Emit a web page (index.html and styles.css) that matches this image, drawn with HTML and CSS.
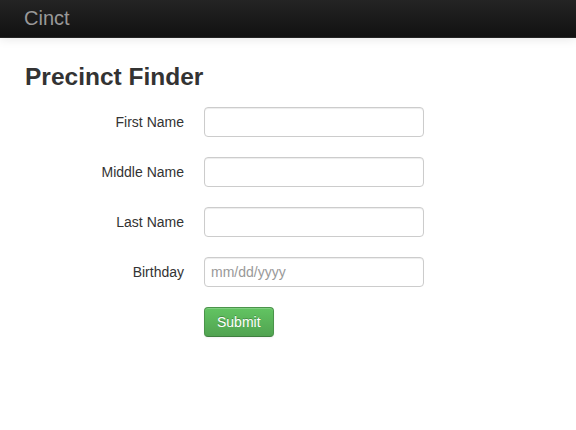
FILE: index.html
```html
<!DOCTYPE html>
<html>
<head>
<meta charset="utf-8">
<title>Cinct</title>
<link rel="stylesheet" href="styles.css">
</head>
<body>
<div class="navbar">
  <a class="brand" href="#">Cinct</a>
</div>
<div class="container">
  <h3 class="title">Precinct Finder</h3>
  <form class="form-horizontal">
    <div class="control-group">
      <label class="control-label">First Name</label>
      <input class="field" type="text">
    </div>
    <div class="control-group">
      <label class="control-label">Middle Name</label>
      <input class="field" type="text">
    </div>
    <div class="control-group">
      <label class="control-label">Last Name</label>
      <input class="field" type="text">
    </div>
    <div class="control-group">
      <label class="control-label">Birthday</label>
      <input class="field" type="text" placeholder="mm/dd/yyyy">
    </div>
    <div class="control-group">
      <span class="control-label"></span>
      <button class="btn-success" type="button">Submit</button>
    </div>
  </form>
</div>
</body>
</html>
```
FILE: styles.css
```css
html, body {
  margin: 0;
  padding: 0;
  background: #fff;
  font-family: "Liberation Sans", Arial, sans-serif;
  font-size: 14px;
  line-height: 20px;
  color: #333;
}
.navbar {
  height: 37px;
  background: linear-gradient(to bottom, #242424, #111111);
  border-bottom: 1px solid #252525;
  box-shadow: 0 1px 10px rgba(0, 0, 0, 0.1);
  display: flex;
  align-items: center;
  padding-left: 24px;
}
.brand {
  font-size: 20px;
  line-height: 20px;
  color: #999;
  text-decoration: none;
  margin-top: -2px;
}
.container {
  padding-left: 24px;
}
.title {
  font-size: 24.5px;
  line-height: 40px;
  font-weight: bold;
  color: #333;
  margin: 19px 0 10px 1px;
}
.form-horizontal {
  margin: 0;
}
.control-group {
  display: flex;
  align-items: center;
  gap: 20px;
  margin-bottom: 20px;
}
.control-label {
  width: 160px;
  text-align: right;
}
.field {
  box-sizing: border-box;
  width: 220px;
  height: 30px;
  padding: 4px 6px;
  border: 1px solid #ccc;
  border-radius: 4px;
  box-shadow: inset 0 1px 1px rgba(0, 0, 0, 0.075);
  font-family: "Liberation Sans", Arial, sans-serif;
  font-size: 14px;
  color: #555;
  margin: 0;
}
.field::placeholder {
  color: #999;
}
.btn-success {
  box-sizing: border-box;
  height: 30px;
  padding: 4px 12px;
  font-family: "Liberation Sans", Arial, sans-serif;
  font-size: 14px;
  line-height: 20px;
  color: #fff;
  text-shadow: 0 -1px 0 rgba(0, 0, 0, 0.25);
  background: linear-gradient(to bottom, #62c462, #51a351);
  border: 1px solid #4a944a;
  border-bottom-color: #3f7f3f;
  border-radius: 4px;
  box-shadow: inset 0 1px 0 rgba(255, 255, 255, 0.2), 0 1px 2px rgba(0, 0, 0, 0.05);
  margin: 0;
}
```
